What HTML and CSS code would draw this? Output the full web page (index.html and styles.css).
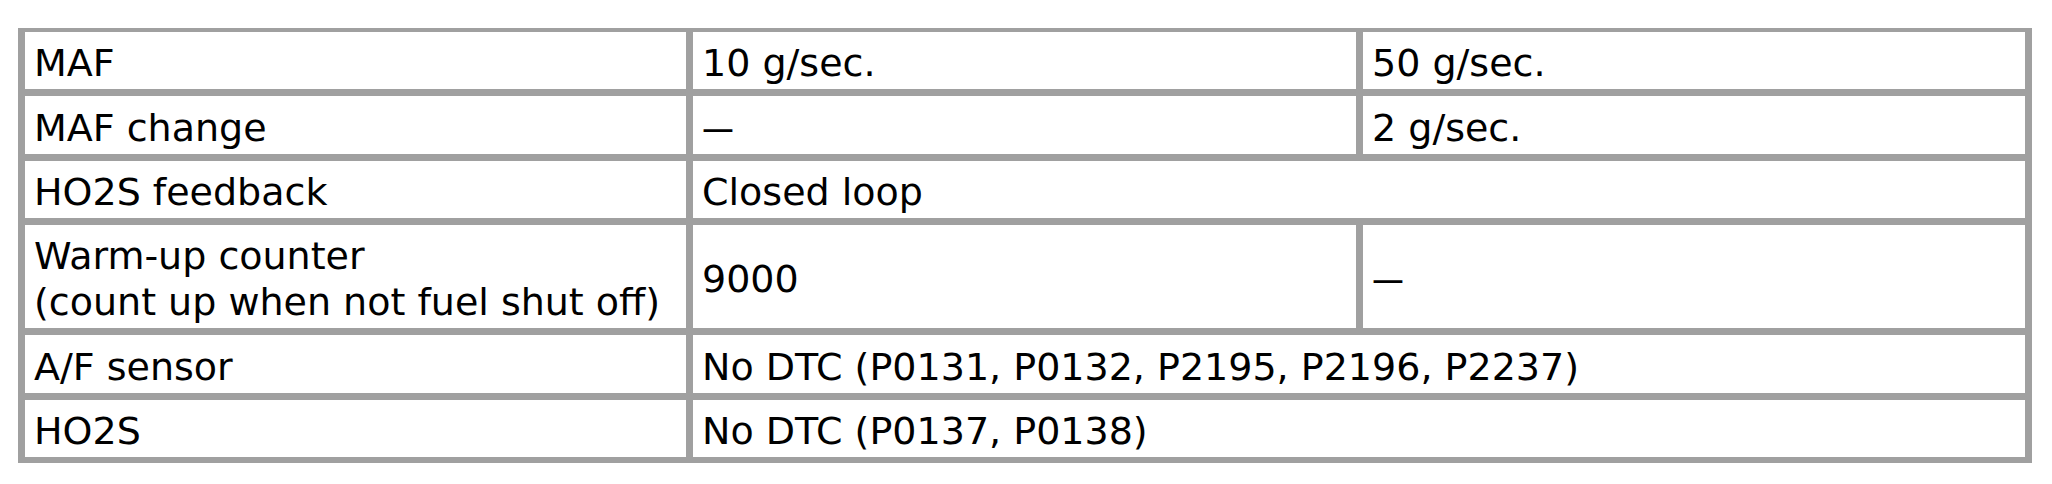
FILE: index.html
```html
<!DOCTYPE html>
<html lang="en">
<head>
<meta charset="utf-8">
<title>Conditions</title>
<link rel="stylesheet" href="styles.css">
</head>
<body>
<div class="table">
  <div class="cell">MAF</div>
  <div class="cell">10 g/sec.</div>
  <div class="cell">50 g/sec.</div>

  <div class="cell">MAF change</div>
  <div class="cell"><span class="dash">—</span></div>
  <div class="cell">2 g/sec.</div>

  <div class="cell">HO2S feedback</div>
  <div class="cell span2">Closed loop</div>

  <div class="cell">Warm-up counter<br>(count up when not fuel shut off)</div>
  <div class="cell">9000</div>
  <div class="cell"><span class="dash">—</span></div>

  <div class="cell">A/F sensor</div>
  <div class="cell span2">No DTC (P0131, P0132, P2195, P2196, P2237)</div>

  <div class="cell">HO2S</div>
  <div class="cell span2">No DTC (P0137, P0138)</div>
</div>
</body>
</html>
```

FILE: styles.css
```css
html, body {
  margin: 0;
  padding: 0;
  background: #ffffff;
}

body {
  padding: 28px 0 0 18px;
  font-family: "DejaVu Sans", Verdana, sans-serif;
  font-size: 38px;
  line-height: 46px;
  color: #000000;
}

.table {
  display: grid;
  width: max-content;
  grid-template-columns: 661px 663px 662px;
  grid-template-rows: 57px 58px 57px 103px 58px 57px;
  column-gap: 7px;
  row-gap: 7px;
  padding: 4px 7px 6px 7px;
  background: #a0a0a0;
}

.cell {
  background: #ffffff;
  display: flex;
  align-items: center;
  padding: 8px 9px 3px 9px;
  white-space: nowrap;
}

.span2 {
  grid-column: span 2;
}

.dash {
  display: inline-block;
  transform: scaleX(0.84);
  transform-origin: left center;
}
```
